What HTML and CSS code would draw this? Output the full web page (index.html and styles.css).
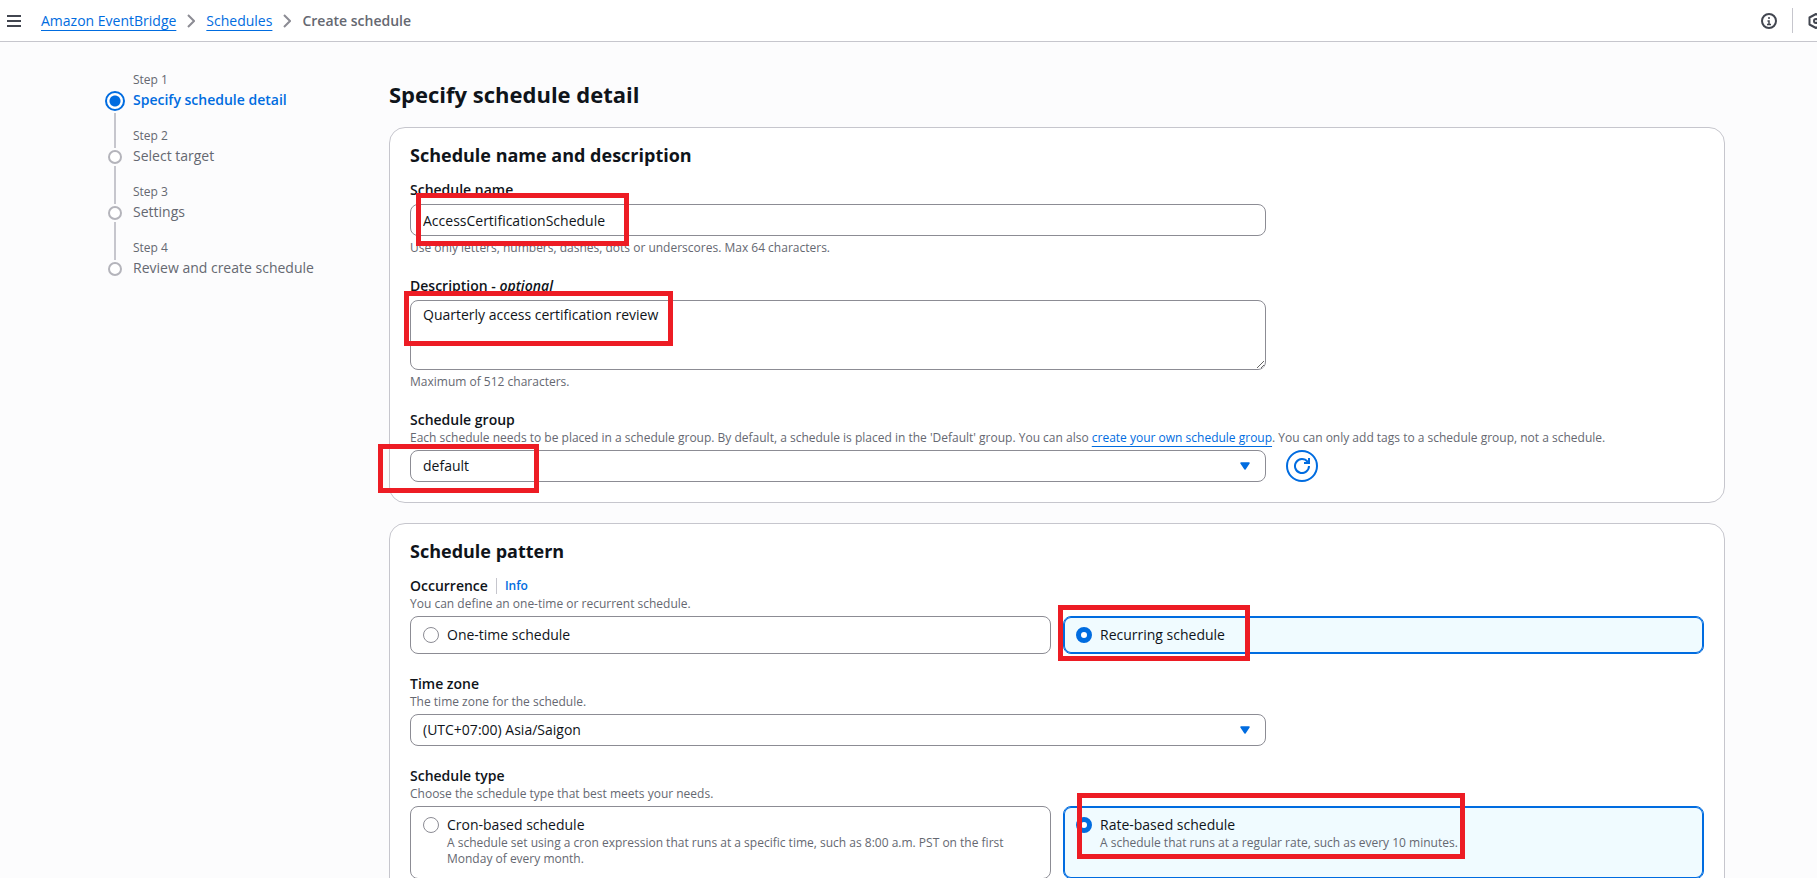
FILE: index.html
```html
<!DOCTYPE html>
<html lang="en">
<head>
<meta charset="utf-8">
<title>Create schedule | Amazon EventBridge</title>
<link rel="stylesheet" href="styles.css">
</head>
<body>
<header class="topbar">
  <button class="icon-button" type="button" aria-label="Open navigation">
    <svg width="14" height="12" viewBox="0 0 14 12"><path d="M0 1h14M0 6h14M0 11h14" stroke="#424650" stroke-width="2"/></svg>
  </button>
  <nav class="breadcrumbs" aria-label="Breadcrumbs">
    <a class="link" href="#eventbridge">Amazon EventBridge</a>
    <svg class="chevron" width="8" height="14" viewBox="0 0 8 14"><path d="M1 1l6 6-6 6"/></svg>
    <a class="link" href="#schedules">Schedules</a>
    <svg class="chevron" width="8" height="14" viewBox="0 0 8 14"><path d="M1 1l6 6-6 6"/></svg>
    <span class="crumb-current" aria-current="page">Create schedule</span>
  </nav>
  <div class="tools">
    <button class="icon-button" type="button" aria-label="Help panel">
      <svg width="16" height="16" viewBox="0 0 16 16" fill="none" stroke="#424650" stroke-width="2"><circle cx="8" cy="8" r="7"/><path d="M8 4v2M6.5 8H8v3.5M6 11.5h4" stroke-width="1.5"/></svg>
    </button>
    <span class="tools-divider"></span>
    <button class="icon-button icon-cut" type="button" aria-label="Settings">
      <svg width="16" height="16" viewBox="0 0 16 16" fill="none" stroke="#424650" stroke-width="2" stroke-linejoin="round"><path d="M8 1l6.500 3.500v7L8 15l-6.500-3.500v-7z"/><circle cx="8" cy="8" r="2"/></svg>
    </button>
  </div>
</header>

<div class="layout">
  <ol class="steps">
    <li class="step step-active"><span class="step-track"><i class="step-dot"></i><i class="step-line"></i></span><span class="step-count">Step 1</span><span class="step-name">Specify schedule detail</span></li>
    <li class="step"><span class="step-track"><i class="step-dot"></i><i class="step-line"></i></span><span class="step-count">Step 2</span><span class="step-name">Select target</span></li>
    <li class="step"><span class="step-track"><i class="step-dot"></i><i class="step-line"></i></span><span class="step-count">Step 3</span><span class="step-name">Settings</span></li>
    <li class="step"><span class="step-track"><i class="step-dot"></i></span><span class="step-count">Step 4</span><span class="step-name">Review and create schedule</span></li>
  </ol>

  <main class="main">
    <h1 class="title">Specify schedule detail</h1>

    <section class="card">
      <h2 class="card-title">Schedule name and description</h2>
      <div class="fields">
        <div class="field">
          <label class="label" for="name">Schedule name</label>
          <div class="control control-gap">
            <input class="input" id="name" type="text" value="AccessCertificationSchedule">
            <span class="mark mark-name"></span>
          </div>
          <p class="hint hint-below">Use only letters, numbers, dashes, dots or underscores. Max 64 characters.</p>
        </div>
        <div class="field">
          <label class="label" for="description">Description - <em>optional</em></label>
          <div class="control control-gap">
            <textarea class="input textarea" id="description">Quarterly access certification review</textarea>
            <span class="mark mark-description"></span>
          </div>
          <p class="hint hint-below">Maximum of 512 characters.</p>
        </div>
        <div class="field">
          <label class="label" for="group">Schedule group</label>
          <p class="hint">Each schedule needs to be placed in a schedule group. By default, a schedule is placed in the 'Default' group. You can also <a class="link" href="#groups">create your own schedule group</a>. You can only add tags to a schedule group, not a schedule.</p>
          <div class="row">
            <div class="control">
              <select class="input select" id="group"><option>default</option></select>
              <svg class="caret" width="10" height="8" viewBox="0 0 10 8"><path d="M1 1h8L5 7z" fill="#006ce0" stroke="#006ce0" stroke-width="1.500" stroke-linejoin="round"/></svg>
              <span class="mark mark-group"></span>
            </div>
            <button class="refresh" type="button" aria-label="Refresh schedule groups">
              <svg width="16" height="16" viewBox="0 0 16 16" fill="none" stroke="#006ce0" stroke-width="2"><path d="M15 8A7 7 0 1 1 13.500 3.700L15 5"/><path d="M15 0v5h-5"/></svg>
            </button>
          </div>
        </div>
      </div>
    </section>

    <section class="card">
      <h2 class="card-title">Schedule pattern</h2>
      <div class="fields">
        <div class="field" role="radiogroup" aria-labelledby="occurrence">
          <div class="label-row"><span class="label" id="occurrence">Occurrence</span><a class="info" href="#info">Info</a></div>
          <p class="hint">You can define an one-time or recurrent schedule.</p>
          <div class="tiles">
            <label class="tile"><input class="radio" type="radio" name="occurrence"><span class="tile-label">One-time schedule</span></label>
            <label class="tile tile-selected"><input class="radio" type="radio" name="occurrence" checked><span class="tile-label">Recurring schedule</span><span class="mark mark-recurring"></span></label>
          </div>
        </div>
        <div class="field">
          <label class="label" for="zone">Time zone</label>
          <p class="hint">The time zone for the schedule.</p>
          <div class="control">
            <select class="input select" id="zone"><option>(UTC+07:00) Asia/Saigon</option></select>
            <svg class="caret" width="10" height="8" viewBox="0 0 10 8"><path d="M1 1h8L5 7z" fill="#006ce0" stroke="#006ce0" stroke-width="1.500" stroke-linejoin="round"/></svg>
          </div>
        </div>
        <div class="field" role="radiogroup" aria-labelledby="type">
          <span class="label" id="type">Schedule type</span>
          <p class="hint">Choose the schedule type that best meets your needs.</p>
          <div class="tiles">
            <label class="tile tile-tall"><input class="radio" type="radio" name="type"><span class="tile-label">Cron-based schedule</span><span class="tile-text">A schedule set using a cron expression that runs at a specific time, such as 8:00 a.m. PST on the first Monday of every month.</span></label>
            <label class="tile tile-tall tile-selected"><input class="radio" type="radio" name="type" checked><span class="tile-label">Rate-based schedule</span><span class="tile-text">A schedule that runs at a regular rate, such as every 10 minutes.</span><span class="mark mark-rate"></span></label>
          </div>
        </div>
      </div>
    </section>
  </main>
</div>
</body>
</html>
```
FILE: styles.css
```css
* { box-sizing: border-box; }
html { height: 100%; overflow: hidden; }
body {
  margin: 0;
  height: 100%;
  overflow: hidden;
  background: #fcfcfd;
  color: #0f141a;
  font: 14px/20px "Open Sans", "Noto Sans", sans-serif;
}
h1, h2, p { margin: 0; }
svg { display: block; flex: none; }

.link { color: #006ce0; text-decoration: underline; text-decoration-thickness: 1px; text-underline-offset: 4px; }

/* Top bar */
.topbar {
  display: flex;
  align-items: center;
  height: 42px;
  padding-left: 7px;
  background: #fff;
  border-bottom: 1px solid #c6c6cd;
}
.icon-button { flex: none; padding: 0; border: 0; background: none; cursor: pointer; }
.breadcrumbs { display: flex; align-items: center; gap: 11px; margin-left: 20px; }
.chevron path { fill: none; stroke: #8c8c94; stroke-width: 2; }
.crumb-current { color: #656871; font-weight: 600; }
.tools { display: flex; align-items: center; margin-left: auto; }
.tools-divider { width: 1px; height: 25px; margin: 0 15px; background: #c6c6cd; }
.icon-cut { width: 9px; overflow: hidden; }

/* Page layout */
.layout { display: flex; align-items: flex-start; padding: 28px 92px 0 105px; }
.main { flex: 1; min-width: 0; }
.title { margin-top: 10px; font-size: 22px; line-height: 28px; font-weight: 700; }

/* Steps */
.steps { flex: none; width: 284px; margin: 0; padding: 0; list-style: none; color: #656871; }
.step { display: grid; grid-template-columns: 20px 1fr; grid-template-rows: 20px 36px; column-gap: 8px; }
.step-track { grid-row: 1 / 3; display: flex; flex-direction: column; align-items: center; padding-top: 24px; }
.step-count { font-size: 12px; }
.step-dot { flex: none; width: 14px; height: 14px; border: 2px solid #b4b4bb; border-radius: 50%; background: #fff; }
.step-line { flex: none; width: 2px; height: 38px; margin: 2px 0; background: #c6c6cd; }
.step-active .step-track { padding-top: 21px; }
.step-active .step-dot { width: 20px; height: 20px; border-color: #006ce0; background: radial-gradient(circle, #006ce0 5px, #fff 6px); }
.step-active .step-line { height: 35px; }
.step-active .step-name { color: #006ce0; font-weight: 600; }

/* Cards and fields */
.card {
  margin-top: 19px;
  padding: 16px 20px 20px;
  background: #fff;
  border: 1px solid #c6c6cd;
  border-radius: 16px;
}
.card + .card { margin-top: 20px; }
.card-title { margin-bottom: 14px; font-size: 18px; line-height: 22px; font-weight: 700; }
.fields { display: flex; flex-direction: column; gap: 20px; }
.label { display: block; font-weight: 600; }
.label-row { display: flex; align-items: center; }
.info { margin-left: 8px; padding-left: 8px; border-left: 1px solid #c6c6cd; line-height: 16px; font-size: 12px; font-weight: 600; color: #006ce0; text-decoration: none; }
.hint { font-size: 12px; line-height: 16px; color: #656871; }
.hint + .control, .hint + .row, .hint + .tiles { margin-top: 4px; }
.hint-below { margin-top: 4px; }

.control { position: relative; width: calc((100% + 20px) * 2 / 3 - 20px); }
.control-gap { margin-top: 4px; }
.row { display: flex; gap: 20px; }
.input {
  display: block;
  width: 100%;
  height: 32px;
  margin: 0;
  padding: 4px 12px;
  border: 1px solid #8c8c94;
  border-radius: 8px;
  background: #fff;
  color: #0f141a;
  font: inherit;
}
.textarea { height: 70px; resize: vertical; }
.select { appearance: none; }
.caret { position: absolute; right: 16px; top: 12px; pointer-events: none; }
.refresh {
  flex: none;
  display: grid;
  place-items: center;
  width: 32px;
  height: 32px;
  padding: 0;
  border: 2px solid #006ce0;
  border-radius: 50%;
  background: #fff;
}

/* Tiles */
.tiles { display: grid; grid-template-columns: 1fr 1fr; gap: 12px; }
.tile {
  position: relative;
  display: grid;
  grid-template-columns: 16px 1fr;
  column-gap: 8px;
  align-content: start;
  padding: 8px 12px;
  border: 1px solid #8c8c94;
  border-radius: 8px;
  background: #fff;
}
.tile-tall { padding-bottom: 11px; }
.tile-selected { border-color: #006ce0; box-shadow: inset 0 0 0 1px #006ce0; background: #f0fbff; }
.tile-text { grid-column: 2; max-width: 560px; font-size: 12px; line-height: 16px; color: #656871; }
.radio {
  appearance: none;
  width: 16px;
  height: 16px;
  margin: 2px 0;
  border: 1px solid #8c8c94;
  border-radius: 50%;
  background: #fff;
}
.radio:checked { border: 5px solid #006ce0; }

/* Highlight frames over the form */
.mark { position: absolute; border: 5px solid #ed1c24; pointer-events: none; }
.mark-name { left: 6px; top: -11px; width: 213px; height: 53px; }
.mark-description { left: -6px; top: -9px; width: 269px; height: 55px; }
.mark-group { left: -32px; top: -6px; width: 161px; height: 49px; }
.mark-recurring { left: -6px; top: -12px; width: 192px; height: 56px; }
.mark-rate { left: 13px; top: -14px; width: 388px; height: 66px; }
```
